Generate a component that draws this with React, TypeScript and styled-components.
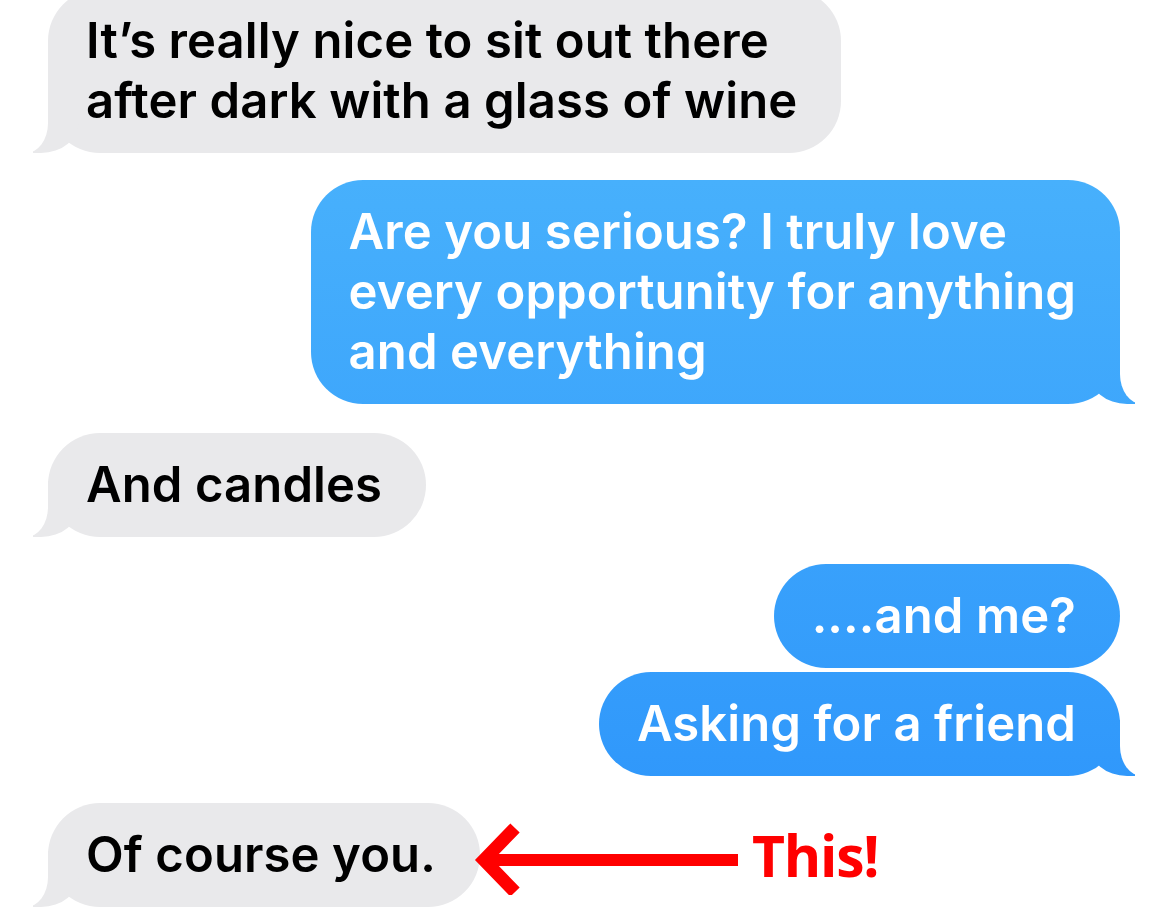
import React from "react";
import styled, { createGlobalStyle, css } from "styled-components";

const GlobalStyle = createGlobalStyle`
  html, body {
    margin: 0;
    padding: 0;
    background: #ffffff;
    overflow: hidden;
  }
  body {
    font-family: "Inter", "Roboto", "Liberation Sans", sans-serif;
    -webkit-font-smoothing: antialiased;
  }
`;

const BLUE = "linear-gradient(180deg, #47b0fc 180px, #3098fb 780px)";
const GRAY = "#e9e9eb";

const Thread = styled.div`
  display: flex;
  flex-direction: column;
  margin-top: -11px;
  padding: 0 50px 0 48px;
`;

const Bubble = styled.div<{ $me?: boolean; $tail?: boolean; $gap?: number }>`
  position: relative;
  align-self: ${(p) => (p.$me ? "flex-end" : "flex-start")};
  margin-top: ${(p) => p.$gap ?? 0}px;
  padding: 22px 44px 22px 38px;
  border-radius: 52px;
  font-size: 49px;
  line-height: 60px;
  font-weight: 600;
  letter-spacing: 0.1px;
  white-space: nowrap;
  color: ${(p) => (p.$me ? "#ffffff" : "#000000")};
  background: ${(p) => (p.$me ? BLUE : GRAY)};
  background-attachment: ${(p) => (p.$me ? "fixed" : "scroll")};

  ${(p) =>
    p.$tail &&
    css`
      &::before {
        content: "";
        position: absolute;
        bottom: 0;
        height: 56px;
        width: 46px;
        background: inherit;
        ${p.$me
          ? css`
              right: -15px;
              border-bottom-left-radius: 38px 32px;
            `
          : css`
              left: -15px;
              border-bottom-right-radius: 38px 32px;
            `}
      }
      &::after {
        content: "";
        position: absolute;
        bottom: 0;
        height: 56px;
        width: 60px;
        background: #ffffff;
        ${p.$me
          ? css`
              right: -60px;
              border-bottom-left-radius: 22px 30px;
            `
          : css`
              left: -60px;
              border-bottom-right-radius: 22px 30px;
            `}
      }
    `}
`;

const AnnotatedRow = styled.div<{ $gap?: number }>`
  display: flex;
  align-items: center;
  align-self: flex-start;
  margin-top: ${(p) => p.$gap ?? 0}px;
`;

const ArrowSvg = styled.svg`
  display: block;
  flex: none;
  margin-left: -10px;
  position: relative;
  z-index: 1;
`;

const Callout = styled.span`
  margin-left: 10px;
  font-family: "Open Sans", "DejaVu Sans", sans-serif;
  font-weight: 700;
  font-size: 57px;
  line-height: 60px;
  letter-spacing: -1.2px;
  color: #ff0000;
  white-space: nowrap;
`;

function Arrow() {
  return (
    <ArrowSvg width="272" height="80" viewBox="0 0 272 80" aria-hidden>
      <line x1="16" y1="45" x2="268" y2="45" stroke="#ff0000" strokeWidth="12" />
      <polyline
        points="45,13 14,45 45,77"
        fill="none"
        stroke="#ff0000"
        strokeWidth="13"
        strokeLinejoin="miter"
        strokeMiterlimit="10"
      />
    </ArrowSvg>
  );
}

export default function App() {
  return (
    <>
      <GlobalStyle />
      <Thread>
        <Bubble $tail>
          It’s really nice to sit out there
          <br />
          after dark with a glass of wine
        </Bubble>
        <Bubble $me $tail $gap={27}>
          Are you serious? I truly love
          <br />
          every opportunity for anything
          <br />
          and everything
        </Bubble>
        <Bubble $tail $gap={29}>
          And candles
        </Bubble>
        <Bubble $me $gap={27}>
          ....and me?
        </Bubble>
        <Bubble $me $tail $gap={4}>
          Asking for a friend
        </Bubble>
        <AnnotatedRow $gap={27}>
          <Bubble $tail>Of course you.</Bubble>
          <Arrow />
          <Callout>This!</Callout>
        </AnnotatedRow>
      </Thread>
    </>
  );
}
